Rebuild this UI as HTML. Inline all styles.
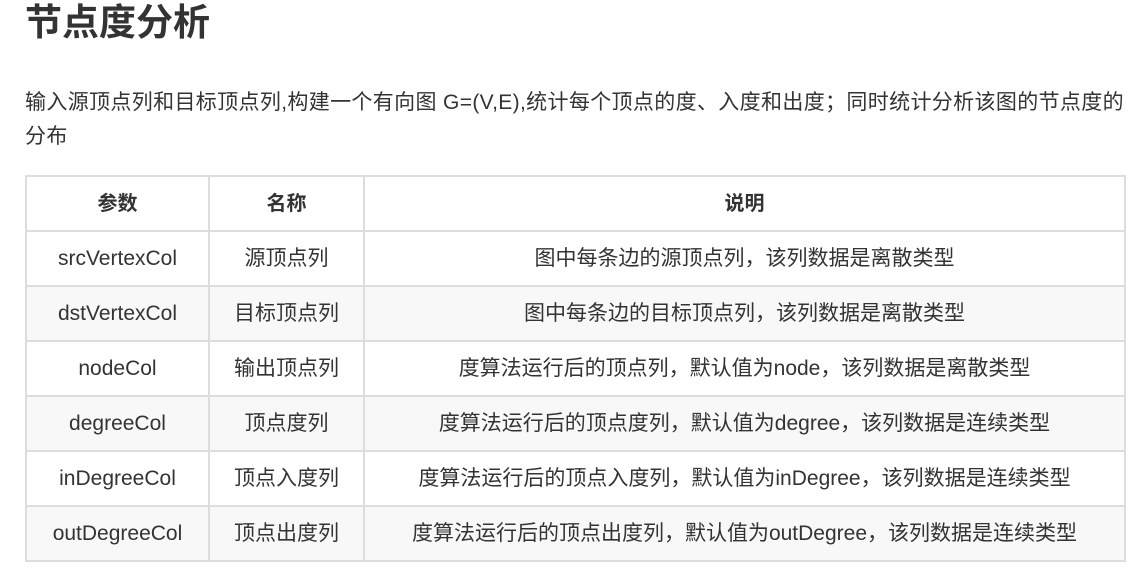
<!DOCTYPE html>
<html><head><meta charset="utf-8"><style>
body{margin:0;background:#fff;color:#333;font-family:"Liberation Sans","Noto Sans CJK SC",sans-serif;}
h1{position:absolute;left:25px;top:0;margin:0;font-size:37px;line-height:46px;font-weight:bold;color:#333;}
p{position:absolute;left:25px;top:86px;width:1110px;margin:0;font-size:21px;line-height:34px;letter-spacing:0.35px;}
table{position:absolute;left:25px;top:175px;border-collapse:collapse;width:1101px;font-size:21px;}
td,th{border:2px solid #ddd;text-align:center;height:53px;padding:0;line-height:26px;vertical-align:middle;}
th{font-weight:bold;font-size:20px;}
tr:nth-child(odd) td{background:#f8f8f8;}
</style></head><body>
<h1>节点度分析</h1>
<p>输入源顶点列和目标顶点列,构建一个有向图 G=(V,E),统计每个顶点的度、入度和出度；同时统计分析该图的节点度的分布</p>
<table>
<tr><th style="width:181px">参数</th><th style="width:153px">名称</th><th>说明</th></tr>
<tr><td>srcVertexCol</td><td>源顶点列</td><td>图中每条边的源顶点列，该列数据是离散类型</td></tr>
<tr><td>dstVertexCol</td><td>目标顶点列</td><td>图中每条边的目标顶点列，该列数据是离散类型</td></tr>
<tr><td>nodeCol</td><td>输出顶点列</td><td>度算法运行后的顶点列，默认值为node，该列数据是离散类型</td></tr>
<tr><td>degreeCol</td><td>顶点度列</td><td>度算法运行后的顶点度列，默认值为degree，该列数据是连续类型</td></tr>
<tr><td>inDegreeCol</td><td>顶点入度列</td><td>度算法运行后的顶点入度列，默认值为inDegree，该列数据是连续类型</td></tr>
<tr><td>outDegreeCol</td><td>顶点出度列</td><td>度算法运行后的顶点出度列，默认值为outDegree，该列数据是连续类型</td></tr>
</table>
</body></html>
